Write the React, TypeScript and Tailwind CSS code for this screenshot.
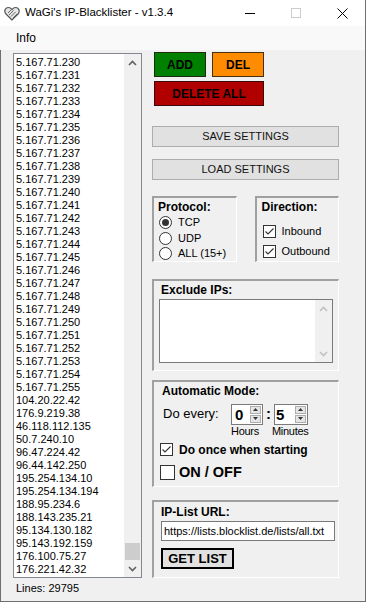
import React from 'react';

const ips = [
  '5.167.71.230', '5.167.71.231', '5.167.71.232', '5.167.71.233', '5.167.71.234',
  '5.167.71.235', '5.167.71.236', '5.167.71.237', '5.167.71.238', '5.167.71.239',
  '5.167.71.240', '5.167.71.241', '5.167.71.242', '5.167.71.243', '5.167.71.244',
  '5.167.71.245', '5.167.71.246', '5.167.71.247', '5.167.71.248', '5.167.71.249',
  '5.167.71.250', '5.167.71.251', '5.167.71.252', '5.167.71.253', '5.167.71.254',
  '5.167.71.255', '104.20.22.42', '176.9.219.38', '46.118.112.135', '50.7.240.10',
  '96.47.224.42', '96.44.142.250', '195.254.134.10', '195.254.134.194', '188.95.234.6',
  '188.143.235.21', '95.134.130.182', '95.143.192.159', '176.100.75.27', '176.221.42.32',
];

const Chevron = ({ up, color = '#606060' }: { up?: boolean; color?: string }) => (
  <svg width="9" height="6" viewBox="0 0 9 6">
    <polyline
      points={up ? '1,5 4.5,1.5 8,5' : '1,1 4.5,4.5 8,1'}
      fill="none"
      stroke={color}
      strokeWidth="1.6"
    />
  </svg>
);

const Radio = ({ checked }: { checked?: boolean }) => (
  <div className="w-[13px] h-[13px] rounded-full border border-[#333] bg-white flex items-center justify-center shrink-0">
    {checked && <div className="w-[7px] h-[7px] rounded-full bg-[#333]" />}
  </div>
);

const Check = ({ checked, size = 13 }: { checked?: boolean; size?: number }) => (
  <div
    className={`${size === 13 ? 'w-[13px] h-[13px]' : 'w-[15px] h-[15px]'} border border-[#333] bg-white flex items-center justify-center shrink-0`}
  >
    {checked && (
      <svg width="11" height="11" viewBox="0 0 11 11">
        <polyline points="1.5,5.5 4,8 9.5,2.5" fill="none" stroke="#333" strokeWidth="1.1" />
      </svg>
    )}
  </div>
);

const Spin = () => (
  <div className="w-[11px] flex flex-col gap-[1px] my-[1px] mr-[1px]">
    <div className="h-[9px] border border-[#adadad] bg-[#e5e5e5] flex items-center justify-center">
      <svg width="5" height="3" viewBox="0 0 5 3"><polygon points="0,3 2.5,0 5,3" fill="#333" /></svg>
    </div>
    <div className="h-[9px] border border-[#adadad] bg-[#e5e5e5] flex items-center justify-center">
      <svg width="5" height="3" viewBox="0 0 5 3"><polygon points="0,0 2.5,3 5,0" fill="#333" /></svg>
    </div>
  </div>
);

const Group = ({ className, children }: { className: string; children: React.ReactNode }) => (
  <div className={`border-l-2 border-t-2 border-r border-b border-l-[#a0a0a0] border-t-[#a0a0a0] border-r-white border-b-white ${className}`}>
    {children}
  </div>
);

const App: React.FC = () => {
  return (
    <div className="w-[366px] h-[602px] flex flex-col bg-white text-black overflow-hidden border-r border-b border-[#6f6f6f] font-['Liberation_Sans',Arial,sans-serif]">
      {/* Title bar */}
      <div className="h-[26px] flex items-center shrink-0">
        <svg className="ml-[4px]" width="16" height="15" viewBox="0 0 16 15">
          <path d="M8 14 L2 8 C0 6 0.5 1.5 4.5 1.5 C6 1.5 7.2 2.5 8 3.6 C8.8 2.5 10 1.5 11.5 1.5 C15.5 1.5 16 6 14 8 Z" fill="#e6e6e6" stroke="#555" strokeWidth="1.2" />
          <path d="M4 7 L7 4 M5 9 L9.5 4.5 M7 10.5 L11.5 6 M9 12 L13 8" stroke="#666" strokeWidth="1" />
        </svg>
        <span className="ml-[5px] text-[11.5px] text-black">WaGi's IP-Blacklister - v1.3.4</span>
        <div className="ml-auto flex items-center h-full">
          <div className="w-[46px] h-full flex items-center justify-center">
            <div className="w-[10px] h-px bg-black" />
          </div>
          <div className="w-[46px] h-full flex items-center justify-center">
            <div className="w-[10px] h-[10px] border border-[#cccccc]" />
          </div>
          <div className="w-[46px] h-full flex items-center justify-center">
            <svg width="11" height="11" viewBox="0 0 11 11">
              <path d="M0.5 0.5 L10.5 10.5 M10.5 0.5 L0.5 10.5" stroke="#000" strokeWidth="1" />
            </svg>
          </div>
        </div>
      </div>

      {/* Menu */}
      <div className="h-[24px] bg-[#f9f9f9] flex items-center shrink-0">
        <span className="ml-[16px] text-[12px]">Info</span>
      </div>

      {/* Client */}
      <div className="flex-1 bg-[#f0f0f0] border-l border-[#6f6f6f] flex">
        {/* Left column */}
        <div className="pl-[12px] pt-[3px] flex flex-col">
          <div className="w-[129px] h-[525px] bg-white border border-[#828790] flex">
            <div className="flex-1 pl-[2px] pt-[2px] overflow-hidden">
              {ips.map((ip) => (
                <div key={ip} className="h-[13px] leading-[13px] text-[11px] text-[#000]">{ip}</div>
              ))}
            </div>
            <div className="w-[17px] bg-[#f0f0f0] flex flex-col">
              <div className="h-[17px] flex items-center justify-center"><Chevron up /></div>
              <div className="flex-1 flex flex-col justify-end">
                <div className="h-[17px] mx-[1px] bg-[#cdcdcd]" />
              </div>
              <div className="h-[17px] flex items-center justify-center"><Chevron /></div>
            </div>
          </div>
          <div className="mt-[4px] ml-[3px] text-[11px] leading-[13px]">Lines: 29795</div>
        </div>

        {/* Right column */}
        <div className="ml-[10px] pt-[2px] flex flex-col w-[187px]">
          <div className="ml-[2px] flex gap-[6px]">
            <div className="w-[52px] h-[25px] bg-[#008000] border border-[#1e2a10] flex items-center justify-center text-[12px] font-bold">ADD</div>
            <div className="w-[52px] h-[25px] bg-[#ff8c00] border border-[#4a2e10] flex items-center justify-center text-[12px] font-bold">DEL</div>
          </div>
          <div className="ml-[2px] mt-[4px] w-[110px] h-[25px] bg-[#b00000] border border-[#3a0808] flex items-center justify-center text-[12px] font-bold">DELETE ALL</div>

          <div className="mt-[20px] h-[21px] bg-[#e1e1e1] border border-[#adadad] flex items-center justify-center text-[11px] text-[#111]">SAVE SETTINGS</div>
          <div className="mt-[12px] h-[21px] bg-[#e1e1e1] border border-[#adadad] flex items-center justify-center text-[11px] text-[#111]">LOAD SETTINGS</div>

          {/* Protocol / Direction */}
          <div className="mt-[16px] flex gap-[18px]">
            <Group className="w-[85px] h-[66px] flex flex-col">
              <div className="pl-[4px] pt-[2px] h-[16px] leading-[14px] text-[12px] font-bold">Protocol:</div>
              <div className="pl-[5px] h-[16px] flex items-center gap-[6px] text-[11px]"><Radio checked />TCP</div>
              <div className="pl-[5px] h-[16px] flex items-center gap-[6px] text-[11px]"><Radio />UDP</div>
              <div className="pl-[5px] h-[14px] flex items-center gap-[6px] text-[11px]"><Radio />ALL (15+)</div>
            </Group>
            <Group className="w-[85px] h-[66px] flex flex-col">
              <div className="pl-[5px] pt-[2px] h-[16px] leading-[14px] text-[12px] font-bold">Direction:</div>
              <div className="mt-[7px] pl-[6px] h-[22px] flex items-center gap-[6px] text-[11px]"><Check checked />Inbound</div>
              <div className="pl-[6px] h-[20px] flex items-center gap-[6px] text-[11px]"><Check checked />Outbound</div>
            </Group>
          </div>

          {/* Exclude IPs */}
          <Group className="mt-[17px] h-[92px] flex flex-col">
            <div className="pl-[7px] pt-[2px] h-[16px] leading-[14px] text-[12px] font-bold">Exclude IPs:</div>
            <div className="ml-[5px] mt-[2px] w-[174px] h-[64px] bg-white border border-[#7a7a7a] flex justify-end">
              <div className="w-[17px] bg-[#f0f0f0] flex flex-col justify-between">
                <div className="h-[17px] flex items-center justify-center"><Chevron up color="#c0c0c0" /></div>
                <div className="h-[17px] flex items-center justify-center"><Chevron color="#c0c0c0" /></div>
              </div>
            </div>
          </Group>

          {/* Automatic Mode */}
          <Group className="mt-[9px] h-[107px] flex flex-col">
            <div className="pl-[8px] pt-[2px] h-[16px] leading-[14px] text-[12px] font-bold">Automatic Mode:</div>
            <div className="mt-[5px] pl-[9px] h-[22px] flex items-center">
              <span className="text-[13px] w-[68px]">Do every:</span>
              <div className="w-[32px] h-[21px] bg-white border border-[#7a7a7a] flex items-stretch">
                <span className="flex-1 pl-[3px] text-[15px] font-bold leading-[19px]">0</span>
                <Spin />
              </div>
              <span className="w-[11px] text-center text-[15px] font-bold">:</span>
              <div className="w-[34px] h-[21px] bg-white border border-[#7a7a7a] flex items-stretch">
                <span className="flex-1 pl-[1px] text-[15px] font-bold leading-[19px]">5</span>
                <Spin />
              </div>
            </div>
            <div className="h-[12px] flex text-[11px] leading-[12px] tracking-[-0.3px]">
              <span className="ml-[77px] w-[41px]">Hours</span>
              <span>Minutes</span>
            </div>
            <div className="mt-[3px] pl-[6px] h-[19px] flex items-center gap-[6px] text-[12px] font-bold"><Check checked />Do once when starting</div>
            <div className="mt-[3px] pl-[6px] h-[21px] flex items-center gap-[4px] text-[14.5px] font-bold"><Check size={15} />ON / OFF</div>
          </Group>

          {/* IP-List URL */}
          <Group className="mt-[13px] h-[78px] flex flex-col">
            <div className="pl-[7px] pt-[3px] h-[17px] leading-[14px] text-[12px] font-bold">IP-List URL:</div>
            <div className="ml-[7px] mt-[2px] w-[174px] h-[20px] bg-white border border-[#7a7a7a] flex items-center pl-[2px] text-[11px]">https://lists.blocklist.de/lists/all.txt</div>
            <div className="ml-[7px] mt-[7px] w-[73px] h-[21px] bg-[#e1e1e1] border-2 border-black flex items-center justify-center text-[13px] font-bold">GET LIST</div>
          </Group>
        </div>
      </div>
    </div>
  );
};

export default App;
